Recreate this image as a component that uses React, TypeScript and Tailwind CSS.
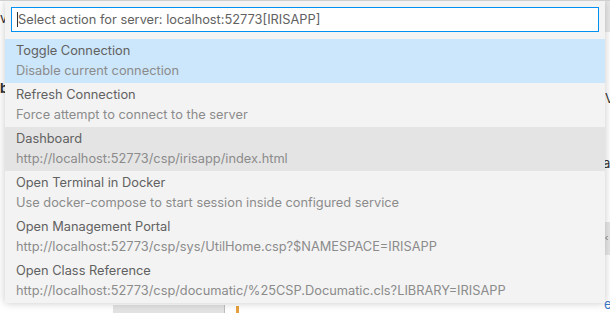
import { ChevronLeft } from 'lucide-react'

const items = [
  { title: 'Toggle Connection', detail: 'Disable current connection', state: 'selected' },
  { title: 'Refresh Connection', detail: 'Force attempt to connect to the server', state: '' },
  { title: 'Dashboard', detail: 'http://localhost:52773/csp/irisapp/index.html', state: 'hover' },
  { title: 'Open Terminal in Docker', detail: 'Use docker-compose to start session inside configured service', state: '' },
  { title: 'Open Management Portal', detail: 'http://localhost:52773/csp/sys/UtilHome.csp?$NAMESPACE=IRISAPP', state: '' },
  { title: 'Open Class Reference', detail: 'http://localhost:52773/csp/documatic/%25CSP.Documatic.cls?LIBRARY=IRISAPP', state: '' },
]

function QuickPickRow({ title, detail, state }: { title: string; detail: string; state: string }) {
  const bg = state === 'selected' ? 'bg-[#cce6fb]' : state === 'hover' ? 'bg-[#e4e4e4]' : ''
  return (
    <div className={`h-[44px] pl-[11px] pt-[2px] flex flex-col ${bg}`}>
      <div className="text-[12.8px] leading-[20px] text-[#616161]">{title}</div>
      <div className="text-[12.8px] leading-[20px] text-[#8b8b8b] whitespace-nowrap">{detail}</div>
    </div>
  )
}

export default function App() {
  return (
    <div
      className="relative w-[610px] h-[313px] overflow-hidden bg-white border-t border-[#cfcfcf]"
      style={{ fontFamily: 'Inter, "Noto Sans", sans-serif' }}
    >
      {/* editor behind the quick pick */}
      <div className="flex h-full text-[13px] text-[#333]">
        <div className="w-[5px] flex flex-col pt-[8px] gap-[52px] overflow-hidden">
          <span className="leading-[18px]">v</span>
          <span className="leading-[18px] font-bold">b</span>
        </div>
        <div className="flex-1 flex flex-col justify-end">
          <div className="flex items-end gap-[11px] pl-[108px] h-[8px]">
            <div className="w-[112px] h-[8px] bg-[#e2e2e2] border-r border-[#bdbdbd]" />
            <div className="w-[3px] h-[7px] bg-[#e8a03c]" />
          </div>
        </div>
        <div className="w-[5px] flex flex-col overflow-visible">
          <div className="h-[34px] bg-[#e8e8e8]" />
          <span className="mt-[57px] leading-[18px]">V</span>
          <span className="mt-[47px] -ml-[2px] leading-[18px]">al</span>
          <div className="mt-[50px] h-[37px] bg-[#e6e6e6] flex items-center">
            <ChevronLeft size={10} className="-ml-[2px]" />
          </div>
          <span className="mt-[40px] -ml-[1px] leading-[18px] text-[#3a78c8]">e</span>
        </div>
      </div>

      {/* quick pick popup */}
      <div className="absolute left-[5px] top-0 w-[600px] bg-[#f3f3f3] shadow-[0_0_8px_rgba(0,0,0,0.22)]">
        <div className="px-[6px] pt-[6px] pb-[7px]">
          <div className="h-[25px] border border-[#0090f1] bg-white flex items-center pl-[5px]">
            <span className="w-px h-[15px] bg-[#333]" />
            <span className="text-[12.8px] text-[#616161] whitespace-nowrap">
              Select action for server: localhost:52773[IRISAPP]
            </span>
          </div>
        </div>
        {items.map((it) => (
          <QuickPickRow key={it.title} {...it} />
        ))}
      </div>
    </div>
  )
}
